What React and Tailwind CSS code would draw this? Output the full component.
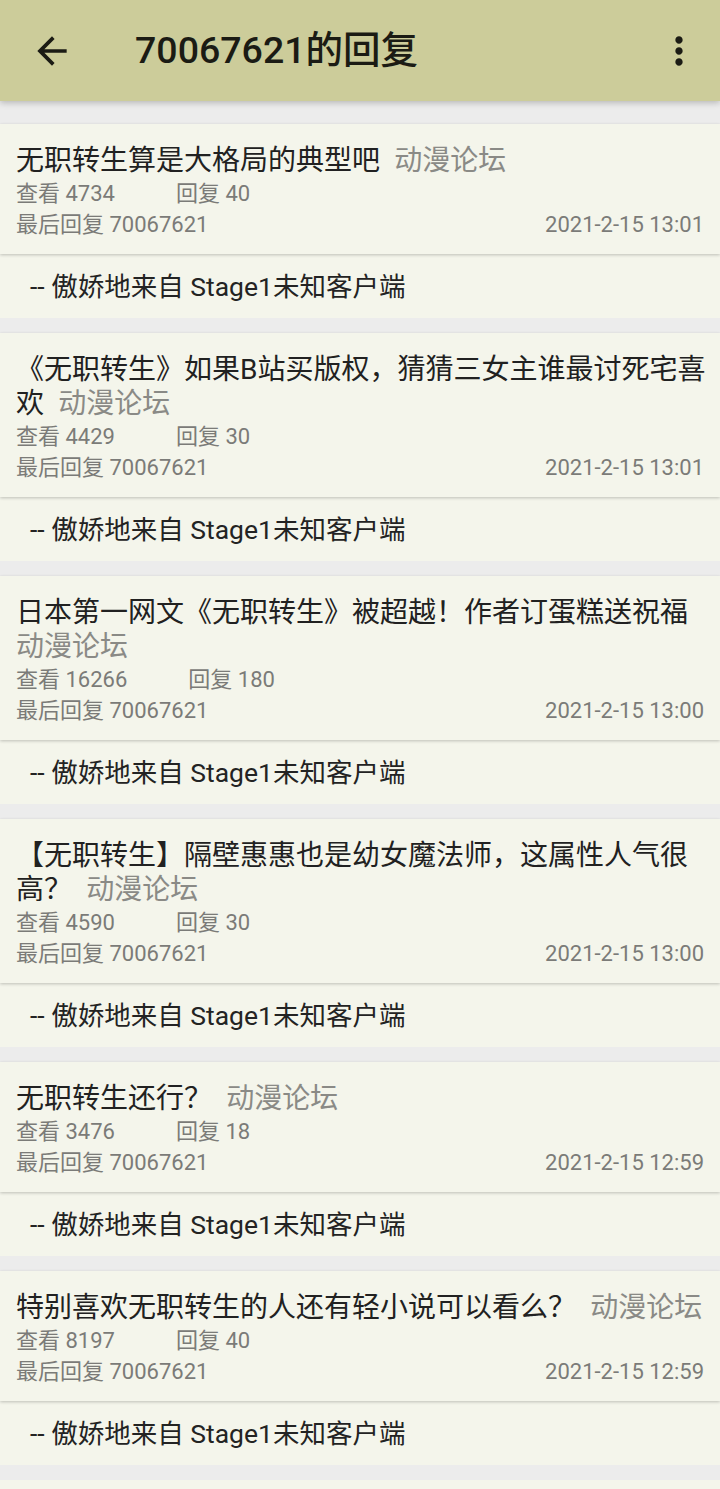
import React from "react";

const posts = [
  { title: "无职转生算是大格局的典型吧", views: "4734", replies: "40", time: "2021-2-15 13:01" },
  { title: "《无职转生》如果B站买版权，猜猜三女主谁最讨死宅喜欢", views: "4429", replies: "30", time: "2021-2-15 13:01" },
  { title: "日本第一网文《无职转生》被超越！作者订蛋糕送祝福", views: "16266", replies: "180", time: "2021-2-15 13:00" },
  { title: "【无职转生】隔壁惠惠也是幼女魔法师，这属性人气很高？", views: "4590", replies: "30", time: "2021-2-15 13:00" },
  { title: "无职转生还行？", views: "3476", replies: "18", time: "2021-2-15 12:59" },
  { title: "特别喜欢无职转生的人还有轻小说可以看么？", views: "8197", replies: "40", time: "2021-2-15 12:59" },
];

function Card({ p }) {
  return (
    <div className="flex flex-col">
      <div className="relative z-10 bg-[#f4f5eb] pl-4 pr-4 pt-[20px] pb-[14px] shadow-[0_1px_3px_rgba(0,0,0,0.22)]">
        <div className="mr-[-4px] text-[28px] leading-[34px] text-[#212121]">
          {p.title}
          <span className="text-[#8a8a86]">{"\u2002"}动漫论坛</span>
        </div>
        <div className="flex text-[22px] leading-[31px] text-[#7b7b78]">
          <span>查看 {p.views}</span>
          <span className="ml-[61px]">回复 {p.replies}</span>
        </div>
        <div className="flex justify-between text-[22px] leading-[31px] text-[#7b7b78]">
          <span>最后回复 70067621</span>
          <span>{p.time}</span>
        </div>
      </div>
      <div className="flex h-[64px] items-center bg-[#f4f5eb] pl-[30px] pt-[2px] text-[26.5px] text-[#232323]">
        -- 傲娇地来自 Stage1未知客户端
      </div>
    </div>
  );
}

export default function App() {
  return (
    <div className="h-[1489px] w-[720px] overflow-hidden bg-[#ececec] font-['Roboto','Noto_Sans_CJK_SC',sans-serif]">
      <header className="relative z-20 flex h-[101px] items-center bg-[#cccc9a] shadow-[0_2px_6px_rgba(0,0,0,0.22)]">
        <div className="ml-[30px] flex h-[44px] w-[44px] items-center justify-center">
          <svg width="44" height="44" viewBox="0 0 24 24" fill="#1b1b14">
            <path d="M20 11H7.83l5.59-5.59L12 4l-8 8 8 8 1.41-1.41L7.83 13H20v-2z" />
          </svg>
        </div>
        <h1 className="ml-[61px] text-[37.5px] font-medium leading-none text-[#1b1b14]">70067621的回复</h1>
        <div className="ml-auto mr-[19px] flex h-[44px] w-[44px] items-center justify-center">
          <svg width="44" height="44" viewBox="0 0 24 24" fill="#1b1b14">
            <path d="M12 8c1.1 0 2-.9 2-2s-.9-2-2-2-2 .9-2 2 .9 2 2 2zm0 2c-1.1 0-2 .9-2 2s.9 2 2 2 2-.9 2-2-.9-2-2-2zm0 6c-1.1 0-2 .9-2 2s.9 2 2 2 2-.9 2-2-.9-2-2-2z" />
          </svg>
        </div>
      </header>
      <div className="flex flex-col gap-[15px] pt-[23px]">
        {posts.map((p, i) => (
          <Card key={i} p={p} />
        ))}
        <div className="h-[40px] bg-[#f4f5eb]" />
      </div>
    </div>
  );
}
